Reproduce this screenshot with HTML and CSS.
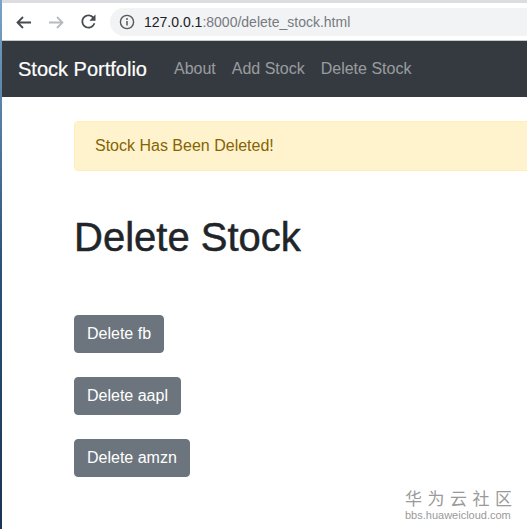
FILE: index.html
```html
<!DOCTYPE html>
<html lang="en">
<head>
    <meta charset="UTF-8">
    <meta name="viewport" content="width=device-width, initial-scale=1.0">
    <title>Delete Stock</title>
    <link rel="stylesheet" href="styles.css">
</head>
<body>

    <div class="window">

        <!-- Browser toolbar -->
        <div class="toolbar">
            <span class="tool-btn">
                <svg width="20" height="20" viewBox="0 0 20 20"><path d="M17 10.5H3.5M9 5L3.5 10.5 9 16" fill="none" stroke="#474a4e" stroke-width="1.8"/></svg>
            </span>
            <span class="tool-btn">
                <svg width="20" height="20" viewBox="0 0 20 20"><path d="M3 10.5h13.5M11 5l5.5 5.5L11 16" fill="none" stroke="#b7babe" stroke-width="1.8"/></svg>
            </span>
            <span class="tool-btn">
                <svg width="21" height="21" viewBox="0 0 24 24"><path fill="#474a4e" d="M17.65 6.35C16.2 4.9 14.21 4 12 4c-4.42 0-7.990 3.58-7.99 8s3.57 8 7.99 8c3.73 0 6.84-2.55 7.73-6h-2.08c-.82 2.33-3.04 4-5.65 4-3.31 0-6-2.690-6-6s2.69-6 6-6c1.66 0 3.14.69 4.22 1.78L13 11h7V4l-2.35 2.35z"/></svg>
            </span>
            <div class="omnibox">
                <svg width="16" height="16" viewBox="0 0 16 16">
                    <circle cx="8" cy="8" r="6.6" fill="none" stroke="#55585c" stroke-width="1.4"/>
                    <path d="M8 7v4.5" stroke="#55585c" stroke-width="1.5"/>
                    <circle cx="8" cy="5" r="0.95" fill="#55585c"/>
                </svg>
                <span class="url"><span class="host">127.0.0.1</span>:8000/delete_stock.html</span>
            </div>
        </div>

        <!-- Site navigation -->
        <nav class="navbar">
            <a class="brand" href="#">Stock Portfolio</a>
            <a class="nav-link" href="#">About</a>
            <a class="nav-link" href="#">Add Stock</a>
            <a class="nav-link" href="#">Delete Stock</a>
        </nav>

        <main class="container">
            <div class="alert">Stock Has Been Deleted!</div>

            <h1>Delete Stock</h1>

            <div class="stock-list">
                <button class="btn">Delete fb</button>
                <button class="btn">Delete aapl</button>
                <button class="btn">Delete amzn</button>
            </div>
        </main>

        <div class="watermark">
            <div class="wm-name">华为云社区</div>
            <div class="wm-url">bbs.huaweicloud.com</div>
        </div>
    </div>

</body>
</html>
```

FILE: styles.css
```css
html, body { margin: 0; height: 100%; }
body { background: linear-gradient(#7aa3c8, #2b5278 50%, #1a3454); font-family: "Liberation Sans", Arial, sans-serif; overflow: hidden; }

.window { position: relative; margin-left: 2px; min-height: 100%; background: #fff; overflow: hidden; }

/* browser chrome */
.toolbar { display: flex; align-items: center; height: 37px; padding-left: 8px; border-top: 3px solid #dcdde0; border-bottom: 1px solid #c9cacd; background: #fff; }
.tool-btn { display: flex; align-items: center; justify-content: center; width: 28px; height: 28px; margin-right: 4px; }
.omnibox { display: flex; align-items: center; gap: 9px; flex: 1; height: 28px; margin-left: 4px; padding-left: 9px; border-radius: 14px 0 0 14px; background: #f1f3f4; }
.url { font-size: 14px; color: #777a7e; }
.url .host { color: #202124; }

/* navbar */
.navbar { display: flex; align-items: center; padding: 8px 16px; background: #343a40; }
.brand { padding: 5px 0; margin-right: 19px; font-size: 20px; line-height: 30px; color: #fff; text-decoration: none; -webkit-text-stroke: 0.2px #fff; }
.nav-link { padding: 8px; font-size: 16px; line-height: 24px; color: rgba(255, 255, 255, .5); text-decoration: none; }

/* page content */
.container { padding-left: 72px; }
.alert { margin: 24px -10px 0 0; padding: 12px 20px; font-size: 16px; line-height: 24px; color: #856404; background: #fff3cd; border: 1px solid #ffeeba; border-radius: 4px; }
h1 { margin: 42px 0 0; font-size: 40px; font-weight: 500; line-height: 48px; color: #212529; -webkit-text-stroke: 0.5px #212529; }
.stock-list { display: flex; flex-direction: column; align-items: flex-start; gap: 24px; margin-top: 54px; }
.btn { padding: 6px 12px; font-family: inherit; font-size: 16px; line-height: 24px; color: #fff; background: #6c757d; border: 1px solid #6c757d; border-radius: 4px; }

/* corner mark */
.watermark { position: absolute; left: 403px; top: 488px; color: #9a9a9a; }
.wm-name { font-family: "Noto Sans CJK SC", sans-serif; font-size: 17px; line-height: 20px; letter-spacing: 5.5px; }
.wm-url { margin-top: 1px; font-size: 11px; line-height: 13px; }
```
